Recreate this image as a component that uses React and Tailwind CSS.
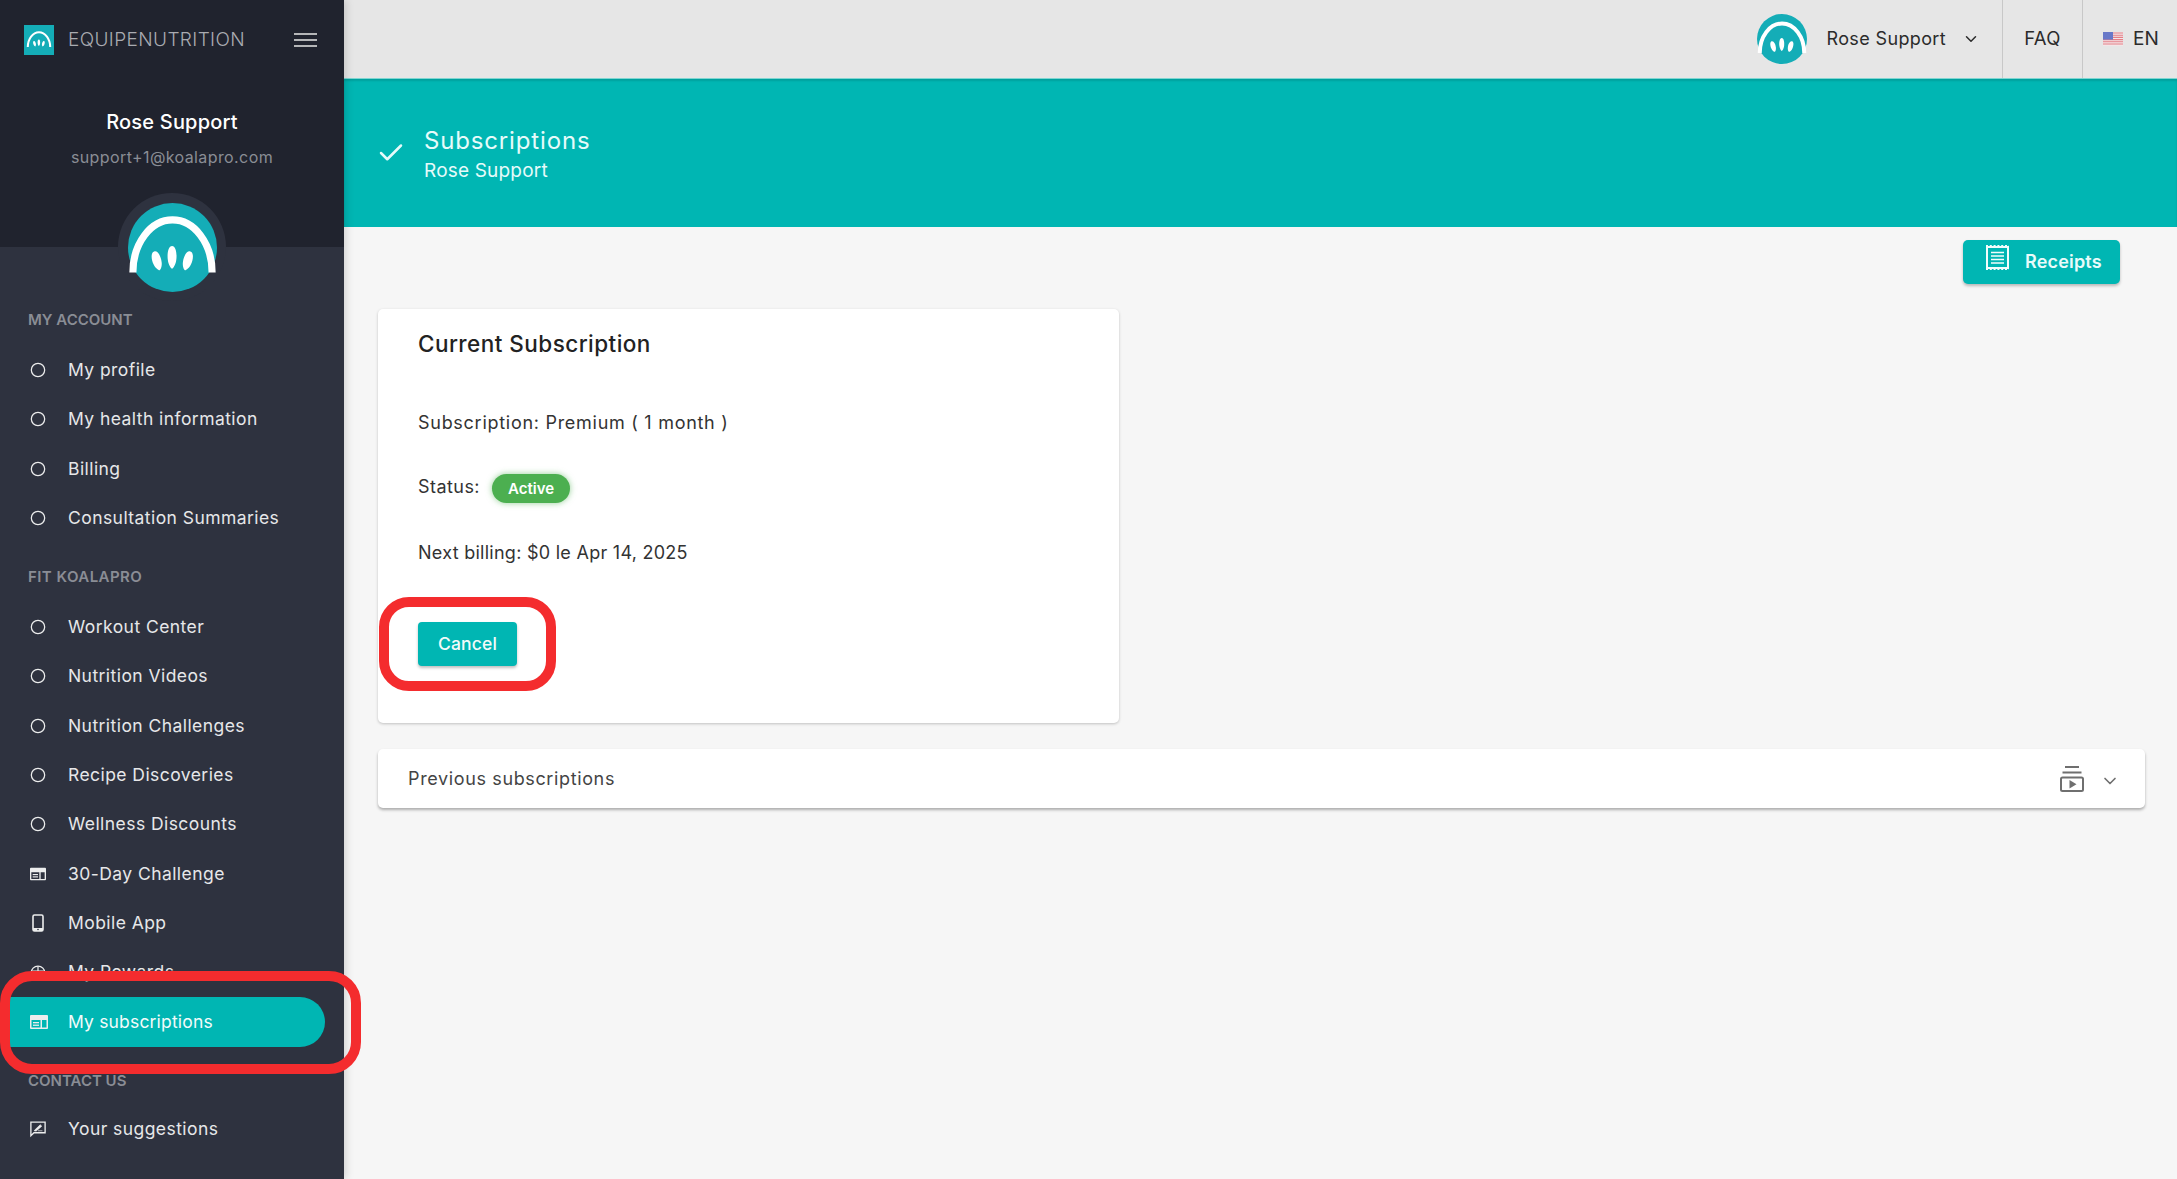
import { ChevronDown, Check, Circle } from "lucide-react";

const seed = "M50 46 C54 46 55.5 56 54.5 64 C54 70 51 75 50 75 C49 75 46 70 45.5 64 C44.5 56 46 46 50 46Z";

function LogoMark() {
  return (
    <>
      <path d="M5.5 78 A44.5 59 0 0 1 94.5 78" fill="none" stroke="#fff" strokeWidth="8" />
      <path d={seed} fill="#fff" transform="translate(49.5 61) scale(1.05 0.88) translate(-50 -60.5)" />
      <path d={seed} fill="#fff" transform="translate(32.5 65) rotate(-16) scale(1.05 0.76) translate(-50 -60.5)" />
      <path d={seed} fill="#fff" transform="translate(67 65) rotate(16) scale(1.05 0.76) translate(-50 -60.5)" />
    </>
  );
}

function RoundLogo({ className }) {
  return (
    <svg viewBox="0 0 100 100" className={className}>
      <circle cx="50" cy="50" r="50" fill="#14adb7" />
      <LogoMark />
    </svg>
  );
}

function SquareLogo({ className }) {
  return (
    <svg viewBox="0 0 100 100" className={className}>
      <rect width="100" height="100" fill="#14adb7" />
      <g transform="translate(8 8) scale(0.84)">
        <LogoMark />
      </g>
    </svg>
  );
}

function CardIcon() {
  return (
    <svg viewBox="0 0 18 14" className="w-[18px] h-[14px]">
      <path fillRule="evenodd" fill="#eceded" d="M0 1 a1 1 0 0 1 1-1 h16 a1 1 0 0 1 1 1 v12 a1 1 0 0 1-1 1 H1 a1 1 0 0 1-1-1Z M1.5 5 v7.5 h9 V5Z M12 5 v7.5 h4.5 V5Z" />
      <rect x="3" y="7" width="6" height="1.3" fill="#eceded" />
      <rect x="3" y="9.6" width="6" height="1.3" fill="#eceded" />
    </svg>
  );
}

function PhoneIcon() {
  return (
    <svg viewBox="0 0 12 18" className="w-[12px] h-[18px]">
      <rect x="1" y="1" width="10" height="16" rx="1.5" fill="none" stroke="#eceded" strokeWidth="1.6" />
      <rect x="1" y="14" width="10" height="3" fill="#eceded" />
      <circle cx="6" cy="15.5" r="0.8" fill="#2e323f" />
    </svg>
  );
}

function RewardIcon() {
  return (
    <svg viewBox="0 0 18 18" className="w-[18px] h-[18px]">
      <circle cx="9" cy="9" r="7.8" fill="none" stroke="#eceded" strokeWidth="1.5" />
      <path d="M9 1.5 L9 7 M2 7 L16 7 M4 14 L9 7 L14 14" fill="none" stroke="#eceded" strokeWidth="1.4" />
    </svg>
  );
}

function SuggestIcon() {
  return (
    <svg viewBox="0 0 18 18" className="w-[18px] h-[18px]">
      <path d="M1 1.2 H17 V13.2 H4.5 L1 16.5Z" fill="none" stroke="#eceded" strokeWidth="1.5" />
      <path d="M5 10.5 L11.5 4.2 L13.2 5.8 L7 11.2 H5Z M9 11 H14" fill="#eceded" stroke="#eceded" strokeWidth="0.8" />
    </svg>
  );
}

function ReceiptIcon() {
  return (
    <svg viewBox="0 0 23 25" className="w-[23px] h-[25px] -mt-[10px]">
      <rect x="1" y="2" width="21" height="21" fill="none" stroke="#f2fdfc" strokeWidth="2" />
      <path d="M0 1 H23 M0 24 H23" stroke="#f2fdfc" strokeWidth="2" strokeDasharray="2 1.8" fill="none" />
      <path d="M5 7.5 H18 M5 11 H18 M5 14.5 H18 M5 18 H18" stroke="#f2fdfc" strokeWidth="1.7" fill="none" />
    </svg>
  );
}

function UsFlag() {
  return (
    <svg viewBox="0 0 20 14" className="w-5 h-[14px]">
      <rect width="20" height="14" fill="#f3e6e8" />
      <path d="M0 1 H20 M0 3.2 H20 M0 5.4 H20 M0 7.6 H20 M0 9.8 H20 M0 12 H20" stroke="#e57f86" strokeWidth="1.1" />
      <rect width="10" height="7.6" fill="#6878c8" />
    </svg>
  );
}

function PlaylistIcon() {
  return (
    <svg viewBox="0 0 24 26" className="w-6 h-[26px]">
      <path d="M5 1 H19 M2.5 6.5 H21.5" stroke="#6f6f6f" strokeWidth="2" fill="none" />
      <rect x="1" y="11.5" width="22" height="13.5" rx="1.5" fill="none" stroke="#6f6f6f" strokeWidth="2" />
      <path d="M9.5 14 L16.5 18.2 L9.5 22.4Z" fill="#6f6f6f" />
    </svg>
  );
}

function SectionTitle({ children, className }) {
  return (
    <div className={`h-5 leading-5 pl-7 text-[15px] font-semibold text-[#8a8d95] ${className}`}>
      {children}
    </div>
  );
}

function NavItem({ icon, label }) {
  return (
    <div className="h-[49.4px] flex items-center text-[#e6e7e9] text-[17.5px] tracking-[0.025em]">
      <div className="w-[68px] pl-[30px] shrink-0 flex justify-center pr-[22px]">
        {icon || <Circle size={20} strokeWidth={1.9} color="#eceded" />}
      </div>
      {label}
    </div>
  );
}

const accountItems = ["My profile", "My health information", "Billing", "Consultation Summaries"];
const fitItems = ["Workout Center", "Nutrition Videos", "Nutrition Challenges", "Recipe Discoveries", "Wellness Discounts"];

function Sidebar() {
  return (
    <aside className="w-[344px] shrink-0 bg-[#2e323f] relative z-20 shadow-[2px_0_8px_rgba(0,0,0,0.15)]">
      <div className="h-[247px] bg-[#20232e] relative">
        <div className="h-20 flex items-center pl-6 pr-[27px]">
          <SquareLogo className="w-[30px] h-[30px]" />
          <span className="ml-[14px] text-[19px] font-light tracking-[0.02em] text-[#a9abb1]">EQUIPENUTRITION</span>
          <div className="ml-auto w-[23px] flex flex-col gap-[3.5px]">
            <div className="h-[2.5px] bg-[#b5b6b8]" />
            <div className="h-[2.5px] bg-[#b5b6b8]" />
            <div className="h-[2.5px] bg-[#b5b6b8]" />
          </div>
        </div>
        <div className="mt-[30px] h-6 leading-6 text-center text-white text-[20px] font-medium tracking-[0.01em]">Rose Support</div>
        <div className="mt-[11px] h-6 leading-6 text-center text-[#8a8d95] text-[16px] tracking-[0.025em]">support+1@koalapro.com</div>
        <div className="absolute left-[118px] -bottom-[54px] w-[108px] h-[108px] rounded-full bg-[#2e323f] flex items-center justify-center z-10">
          <RoundLogo className="w-[89px] h-[89px]" />
        </div>
      </div>

      <SectionTitle className="mt-[63px] mb-[15.3px]">MY ACCOUNT</SectionTitle>
      {accountItems.map((item) => (
        <NavItem key={item} label={item} />
      ))}

      <SectionTitle className="mt-6 mb-[15.3px] tracking-[0.03em]">FIT KOALAPRO</SectionTitle>
      {fitItems.map((item) => (
        <NavItem key={item} label={item} />
      ))}
      <NavItem icon={<CardIcon />} label="30-Day Challenge" />
      <NavItem icon={<PhoneIcon />} label="Mobile App" />
      <NavItem icon={<RewardIcon />} label="My Rewards" />

      {/* Active item with the red marker drawn over it */}
      <div className="relative ml-2 w-[317px] h-[50px] rounded-r-full bg-[#00b6b3] flex items-center text-[#f2fbfa] text-[17.5px] tracking-[0.01em]">
        <div className="w-[60px] pl-[22px] shrink-0">
          <CardIcon />
        </div>
        My subscriptions
        <div className="absolute -left-2 -right-[36px] -top-[26px] -bottom-[27px] border-[10px] border-[#f42c2e] rounded-[32px] pointer-events-none" />
      </div>

      <SectionTitle className="mt-6 mb-[13px]">CONTACT US</SectionTitle>
      <NavItem icon={<SuggestIcon />} label="Your suggestions" />
    </aside>
  );
}

function Header() {
  return (
    <header className="h-[79px] shrink-0 bg-[#e6e6e6] border-b border-[#7fd6d2] flex justify-end items-stretch text-[#2b2b2b]">
      <div className="flex items-center">
        <RoundLogo className="w-[50px] h-[50px]" />
        <span className="ml-[20px] -mt-[1px] text-[18px] tracking-[0.02em]">Rose Support</span>
        <ChevronDown size={18} strokeWidth={2} className="ml-4 mr-[22px]" />
      </div>
      <div className="w-[80px] border-l border-[#c8c8c8] flex items-center justify-center text-[18.5px] tracking-[0.02em]">FAQ</div>
      <div className="w-[95px] border-l border-[#c8c8c8] flex items-center pl-5 text-[19px]">
        <UsFlag />
        <span className="ml-[10px]">EN</span>
      </div>
    </header>
  );
}

function CurrentSubscription() {
  return (
    <section className="w-[741px] h-[414px] mt-[25px] bg-white rounded-[5px] shadow-[0_1px_3px_rgba(0,0,0,0.22)] pl-10 pt-[22px] text-[#333] text-[18px]">
      <h2 className="h-[26px] leading-[26px] text-[22.5px] font-medium text-[#222] tracking-[0.02em]">Current Subscription</h2>
      <p className="mt-[54px] h-6 leading-6 tracking-[0.04em]">Subscription: Premium ( 1 month )</p>
      <div className="mt-10 h-[30px] flex items-start leading-6 tracking-[0.025em]">
        <span>Status:</span>
        <span className="ml-3 -mt-[1px] w-[78px] h-[29px] rounded-full bg-[#4caf50] shadow-[0_0_6px_rgba(76,175,80,0.6)] text-white text-[15px] font-semibold flex items-center justify-center tracking-normal">Active</span>
      </div>
      <p className="mt-9 h-6 leading-6 tracking-[0.015em]">Next billing: $0 le Apr 14, 2025</p>
      <div className="relative mt-[57px] w-[99px] h-11">
        <button className="w-full h-full rounded bg-[#00b6b3] shadow-[0_2px_3px_rgba(0,0,0,0.25)] text-[#f2fbfa] text-[17.5px] font-medium tracking-[0.01em]">Cancel</button>
        <div className="absolute -left-[39px] -right-[39px] -top-[25px] -bottom-[25px] border-[10px] border-[#f42c2e] rounded-[30px] pointer-events-none" />
      </div>
    </section>
  );
}

export default function App() {
  return (
    <div className="h-screen flex overflow-hidden bg-[#f6f6f6] font-['Inter',sans-serif]">
      <Sidebar />
      <main className="flex-1 min-w-0 flex flex-col">
        <Header />
        <div className="h-[148px] shrink-0 bg-[#00b6b3] flex items-center pl-[32px] text-[#e6fbfa] shadow-[inset_0_2px_2px_rgba(0,0,0,0.12)]">
          <Check size={30} strokeWidth={2} />
          <div className="ml-[18px] mt-[2px]">
            <div className="text-[24px] leading-[30px] tracking-[0.035em]">Subscriptions</div>
            <div className="text-[19px] leading-[24px] mt-[3px] tracking-[0.01em]">Rose Support</div>
          </div>
        </div>
        <div className="pl-[34px] pr-8 pt-[13px]">
          <div className="flex justify-end pr-[25px]">
            <button className="w-[157px] h-11 rounded-[5px] bg-[#00b6b3] shadow-[0_2px_3px_rgba(0,0,0,0.25)] flex items-center pl-[23px] text-[#e8fbfa] text-[18px] font-semibold tracking-[0.01em]">
              <ReceiptIcon />
              <span className="ml-[16px] -mt-[1px]">Receipts</span>
            </button>
          </div>
          <CurrentSubscription />
          <section className="mt-[26px] h-[59px] bg-white rounded-[5px] shadow-[0_2px_3px_rgba(0,0,0,0.3)] flex items-center pl-[30px] text-[#444] text-[18px] tracking-[0.035em]">
            <span className="-mt-[1px]">Previous subscriptions</span>
            <div className="ml-auto flex items-center pr-[25px] text-[#6f6f6f]">
              <PlaylistIcon />
              <ChevronDown size={20} strokeWidth={2} className="ml-[16px] mt-1" />
            </div>
          </section>
        </div>
      </main>
    </div>
  );
}
